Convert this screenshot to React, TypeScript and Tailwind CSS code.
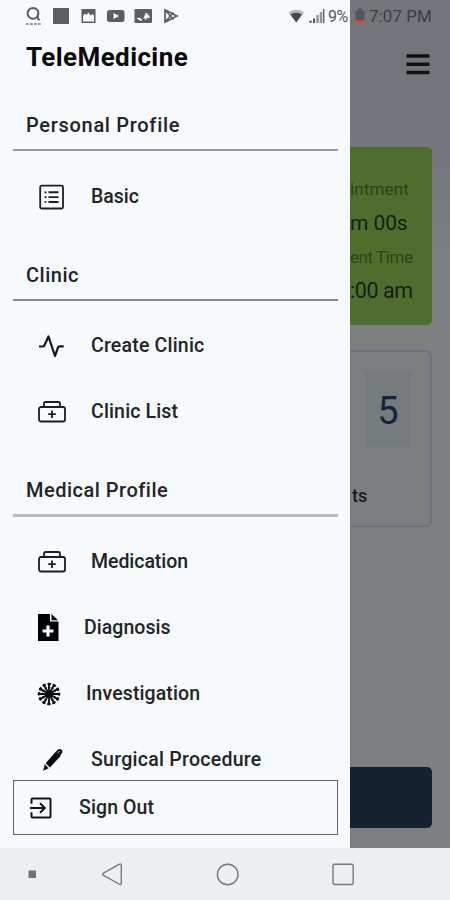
import type { ReactNode } from "react";

const ListIcon = () => (
  <svg width="26" height="26" viewBox="0 0 26 26" fill="none" stroke="#1c1e20">
    <rect x="2.2" y="1.7" width="22.8" height="22.8" rx="1.5" strokeWidth="1.8" />
    <path d="M10.5 8.3H20.5M10.5 13.1H20.5M10.5 18H20.5" strokeWidth="1.9" />
    <path d="M6.5 8.3h2M6.5 13.1h2M6.5 18h2" strokeWidth="1.7" />
  </svg>
);

const PulseIcon = () => (
  <svg width="26" height="26" viewBox="0 0 26 26" fill="none" stroke="#151618" strokeWidth="2.2">
    <path d="M1 13.500h3.800c.8 0 1.200-.3 1.500-1L10.500 3.500 17 23l3-8.700c.3-.7.7-1 1.400-1h4.300" strokeLinejoin="round" />
  </svg>
);

const MedkitIcon = () => (
  <svg width="28" height="24" viewBox="0 0 28 24" fill="none" stroke="#1c1e20" strokeWidth="1.8">
    <rect x="1" y="7" width="26" height="14.5" rx="2" />
    <path d="M6 7V3.5C6 2.5 6.5 2 7.5 2h13c1 0 1.5.5 1.5 1.5V7M14 10.5v7.5M10.2 14.2h7.6" />
  </svg>
);

const DiagnosisIcon = () => (
  <svg width="22" height="28" viewBox="0 0 22 28" fill="#000">
    <path d="M1 0H13V7.5H21.5V27H1Z" />
    <path d="M14.5 0L21 6.3H14.5Z" />
    <path d="M11 11.5v11M5.5 17h11" stroke="#f6fafd" strokeWidth="3.2" />
  </svg>
);

const BurstIcon = () => (
  <svg width="24" height="24" viewBox="0 0 24 24" fill="none" stroke="#0c0d0e" strokeWidth="1.8">
    <circle cx="12" cy="12" r="3" fill="#0c0d0e" stroke="none" />
    <path d="M12 .8V23.2M.8 12H23.2" />
    <path d="M6.4 2.3 17.6 21.7M17.6 2.3 6.4 21.7M2.3 6.4 21.7 17.6M2.3 17.6 21.7 6.4" />
    <circle cx="12" cy="12" r="10" strokeWidth="2.2" strokeDasharray="3.4 1.836" strokeDashoffset="1.7" />
    <circle cx="12" cy="12" r="6.6" strokeWidth="1.2" strokeDasharray="2.4 1.056" strokeDashoffset="1.2" />
  </svg>
);

const PenIcon = () => (
  <svg width="22" height="24" viewBox="0 0 22 24" fill="#0b0c0d">
    <path d="M1.2 22.8 2.8 16.3 6.7 20.3Z" />
    <path d="M3.6 15.2 14 3.5 18.6 8 8 19.4Z" />
    <path d="M14 3.5 15.9 1.8c1.100-.9 2.600-1 3.700 0 1.100 1.100 1.100 2.500.2 3.500L18.200 8Z" />
    <path d="M15.8 4.6 17.8 3.2" stroke="#f6fafd" strokeWidth=".9" />
  </svg>
);

const SignOutIcon = () => (
  <svg width="22" height="22" viewBox="0 0 22 22" fill="none" stroke="#151618" strokeWidth="2">
    <path d="M1.5 6.8V2.5c0-.7.3-1 1-1h17c.7 0 1 .3 1 1v17c0 .7-.3 1-1 1h-17c-.7 0-1-.3-1-1v-4.3" />
    <path d="M0 11H14.5M10 6.2 14.8 11 10 15.8" />
  </svg>
);

const StatusBar = () => (
  <div className="absolute inset-x-0 top-0 flex h-8 items-center">
    <svg width="180" height="32" viewBox="0 0 180 32" fill="#5c5e61">
      <circle cx="33" cy="13.3" r="5.4" fill="none" stroke="#5c5e61" strokeWidth="2" />
      <path d="M38 13.5V19.5H40" fill="none" stroke="#5c5e61" strokeWidth="1.6" />
      <path d="M26 24H41" stroke="#9a9c9f" strokeWidth="1.8" strokeDasharray="2.8 1.2" />
      <rect x="53" y="8" width="16" height="16" />
      <path d="M81.500 9H95.500V23H81.500ZM83 21.500H94V15.500L92.500 14 90.500 15.500 88.500 12.500 86.500 15 85 13.500 83 16Z" fillRule="evenodd" />
      <rect x="107" y="10" width="17.5" height="12" rx="2.5" />
      <path d="M113.5 13 119 16 113.5 19Z" fill="#f6fafd" />
      <rect x="134.5" y="9" width="17.5" height="14" rx="1" />
      <path d="M136.5 18.5 139.5 17.5 142.5 20 146 12.5 149.5 16V18.5L147.5 17.5 146 20 144 18 141 21Z" fill="#f6fafd" />
      <path d="M165 10V22L177 16ZM165 10 173.5 19.5M165 22 173.5 12.5" fill="none" stroke="#5c5e61" strokeWidth="1.7" />
    </svg>
    <svg className="ml-[108px]" width="38" height="16" viewBox="0 0 38 16">
      <path d="M.5 4.5C5 .8 11.5.8 16 4.5L8.2 14.5Z" fill="#b4b7ba" />
      <path d="M2.5 6.5C6 4.2 10.5 4.2 14 6.5L8.2 14.5Z" fill="#45474a" />
      <path d="M22.5 15V12.5M26 15V10.5" stroke="#4e5053" strokeWidth="2" />
      <path d="M29.5 15V7M33 15V4" stroke="#929599" strokeWidth="2.5" />
      <path d="M35.7 15V1" stroke="#66696c" strokeWidth="1.5" />
    </svg>
    <span className="ml-[2px] w-[23px] pt-px text-[16px] tracking-[-0.4px] text-[#55575a]">9%</span>
    <svg className="ml-[4px]" width="10" height="16" viewBox="0 0 10 16">
      <path d="M.5 2.5H3V.5H7V2.5H9.5V13H.5Z" fill="#55575b" />
      <path d="M.5 12.5H9.5V15.5H.5Z" fill="#d34a3a" />
    </svg>
    <span className="ml-[4px] pt-px text-[17px] tracking-[0.05px] whitespace-nowrap text-[#3c3e41]">7:07 PM</span>
  </div>
);

const Section = ({ title, line, children }: { title: string; line: string; children: ReactNode }) => (
  <section>
    <div className="flex h-[71px] items-end pr-[12px] pl-[13px]">
      <h2 className={`w-full px-[13px] text-[20px] leading-[30px] font-medium ${line}`}>
        {title}
      </h2>
    </div>
    <ul className="mt-[12.5px]">{children}</ul>
  </section>
);

const Item = ({ icon, label, pad = "pl-[38px]", gap = "w-[53px]", track = "tracking-[0.15px]" }: {
  icon: ReactNode;
  label: string;
  pad?: string;
  gap?: string;
  track?: string;
}) => (
  <li className={`flex h-[66px] items-center ${pad}`}>
    <span className={`shrink-0 ${gap}`}>{icon}</span>
    <span className={`text-[19.5px] font-medium whitespace-nowrap ${track}`}>{label}</span>
  </li>
);

const Drawer = () => (
  <aside className="flex h-[848px] w-[350px] shrink-0 flex-col bg-[#f6fafd] text-[#222426]">
    <h1 className="h-[80px] pt-[39px] pl-[26px] text-[26px] leading-9 font-bold tracking-[0.4px] text-[#08090a]">
      TeleMedicine
    </h1>
    <div className="h-[700px] overflow-hidden">
      <Section title="Personal Profile" line="h-[41px] border-b-2 border-[#999b9e] tracking-[0.7px]">
        <Item icon={<ListIcon />} label="Basic" track="tracking-[0px]" />
      </Section>
      <Section title="Clinic" line="h-[41px] border-b-2 border-[#87898c] tracking-[0.5px]">
        <Item icon={<PulseIcon />} label="Create Clinic" track="tracking-[0.2px]" />
        <Item icon={<MedkitIcon />} label="Clinic List" />
      </Section>
      <Section title="Medical Profile" line="-mb-px h-[42px] border-b-3 border-[#b9bcbf] tracking-[0.5px]">
        <Item icon={<MedkitIcon />} label="Medication" track="tracking-[-0.05px]" />
        <Item icon={<DiagnosisIcon />} label="Diagnosis" pad="pl-[37px]" gap="w-[47px]" track="tracking-[0.05px]" />
        <Item icon={<BurstIcon />} label="Investigation" pad="pl-[37px]" gap="w-[49px]" track="tracking-[0.1px]" />
        <Item icon={<PenIcon />} label="Surgical Procedure" pad="pl-[42px]" gap="w-[49px]" track="tracking-[0.27px]" />
      </Section>
    </div>
    <button className="mx-[13px] flex h-[55px] w-[325px] items-center border border-[#636568] pl-[16px]">
      <SignOutIcon />
      <span className="ml-[27px] text-[19.5px] font-medium tracking-[0.1px]">Sign Out</span>
    </button>
  </aside>
);

const Dashboard = () => (
  <main className="flex h-[848px] w-[100px] flex-col bg-linear-to-b from-[#72767b] from-15% to-[#7c7e80] to-30%">
    <div className="flex h-[147px] justify-end pt-[54px] pr-[20px]">
      <svg width="24" height="22" viewBox="0 0 24 22">
        <path d="M.5 2H23.5M.5 10.2H23.5M.5 18.5H23.5" stroke="#101112" strokeWidth="3.5" />
      </svg>
    </div>
    <div className="mr-[18px] flex h-[178px] flex-col rounded-[5px] rounded-l-none bg-[#4f6e2d] pt-[25px] whitespace-nowrap">
      <p className="text-[17px] leading-[34px] tracking-[0.15px] text-[#2c431c]">intment</p>
      <p className="text-[21px] leading-[34px] tracking-[-0.1px] text-[#142010]">m 00s</p>
      <p className="text-[17px] leading-[34px] tracking-[-0.45px] text-[#2c431c]">ent Time</p>
      <p className="text-[21.5px] leading-[34px] tracking-[-0.45px] text-[#142010]">:00 am</p>
    </div>
    <div className="mt-[25px] mr-[18px] h-[177px] rounded-r-[6px] border-2 border-l-0 border-[#6f7280]">
      <div className="mt-[20px] ml-[15px] flex h-[75px] w-[46px] items-center justify-center bg-[#767b7e] pt-1 text-[38px] text-[#132340]">
        5
      </div>
      <p className="mt-[37px] pl-[2px] text-[18px] leading-6 font-medium text-[#17191b]">ts</p>
    </div>
    <div className="mt-[240px] mr-[18px] h-[61px] rounded-r-[5px] bg-[#132130]" />
  </main>
);

const NavBar = () => (
  <nav className="h-[52px] bg-[#edeef0]">
    <svg width="450" height="52" viewBox="0 0 450 52" fill="none" stroke="#77797c" strokeWidth="1.4">
      <rect x="28.5" y="22.500" width="7.5" height="7.5" fill="#707275" stroke="none" />
      <path d="M103.5 25.2 119 16.3Q121.3 15.2 121.3 17.5V35Q121.3 37.3 119 36L103.5 27.4Q101.8 26.3 103.5 25.2Z" />
      <circle cx="227.7" cy="26.5" r="10.3" />
      <rect x="333" y="16.3" width="20.2" height="20.2" rx="1.5" />
    </svg>
  </nav>
);

export default function App() {
  return (
    <div className="relative h-[900px] w-[450px] overflow-hidden bg-[#edeef0] font-[Roboto,sans-serif]">
      <div className="flex">
        <Drawer />
        <Dashboard />
      </div>
      <NavBar />
      <StatusBar />
    </div>
  );
}
